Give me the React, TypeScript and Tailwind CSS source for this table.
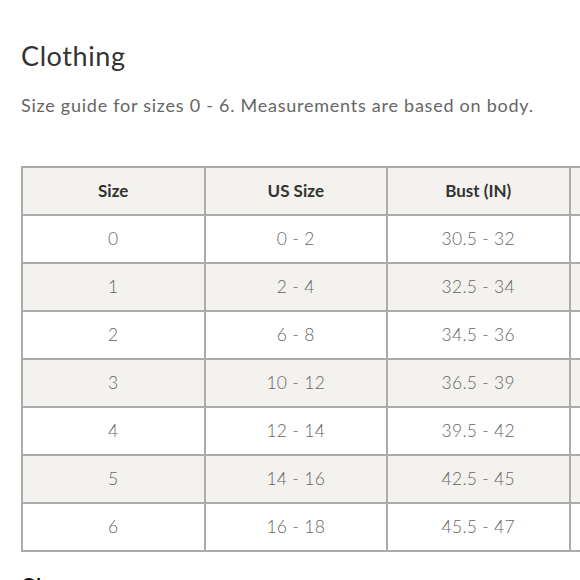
import React from "react";

const rows = [
  ["0", "0 - 2", "30.5 - 32", "24 - 25"],
  ["1", "2 - 4", "32.5 - 34", "26 - 27"],
  ["2", "6 - 8", "34.5 - 36", "28 - 29"],
  ["3", "10 - 12", "36.5 - 39", "30 - 32"],
  ["4", "12 - 14", "39.5 - 42", "33 - 35"],
  ["5", "14 - 16", "42.5 - 45", "36 - 38"],
  ["6", "16 - 18", "45.5 - 47", "39 - 41"],
];

export default function App() {
  return (
    <div
      className="w-[580px] h-[580px] overflow-hidden bg-white"
      style={{ fontFamily: "Lato, 'Open Sans', sans-serif" }}
    >
      <div className="pl-[21px] pt-[40px]">
        <h1 className="text-[27px] leading-[32px] text-[#333] font-normal tracking-[0.6px]">Clothing</h1>
        <p className="mt-[21px] text-[18px] leading-[24px] text-[#666] tracking-[0.75px] whitespace-nowrap">
          Size guide for sizes 0 - 6. Measurements are based on body.
        </p>
        <table className="mt-[49px] border-collapse w-[730px] table-fixed">
          <thead>
            <tr className="bg-[#f3f2ef] h-[48px]">
              {["Size", "US Size", "Bust (IN)", "Waist (IN)"].map((h) => (
                <th
                  key={h}
                  className="border-2 border-[#ababab] w-[182.5px] text-[17px] font-bold text-[#333] text-center"
                >
                  {h}
                </th>
              ))}
            </tr>
          </thead>
          <tbody>
            {rows.map((r, i) => (
              <tr key={i} className={`h-[48px] ${i % 2 === 1 ? "bg-[#f3f2ef]" : "bg-white"}`}>
                {r.map((c, j) => (
                  <td
                    key={j}
                    className="border-2 border-[#ababab] text-center text-[17.5px] text-[#666] font-light tracking-[0.3px]"
                  >
                    {c}
                  </td>
                ))}
              </tr>
            ))}
          </tbody>
        </table>
        <h2 className="mt-[20px] text-[27px] leading-[32px] text-[#111] font-normal">Shoes</h2>
      </div>
    </div>
  );
}
